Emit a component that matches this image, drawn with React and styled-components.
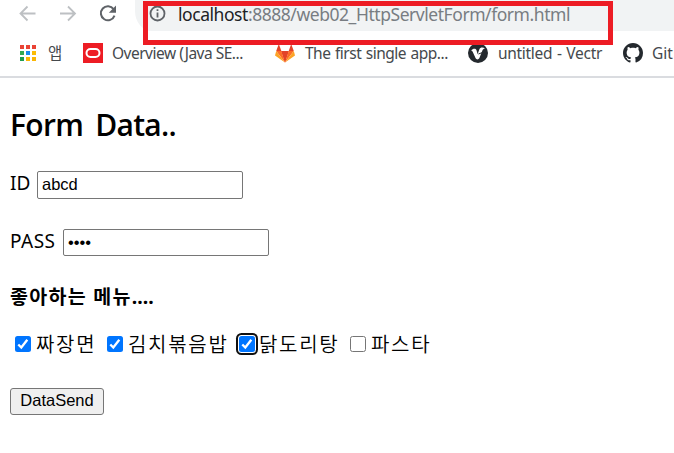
import React from "react";
import styled, { createGlobalStyle } from "styled-components";

const Global = createGlobalStyle`
  * { box-sizing: border-box; }
  html, body { margin: 0; background: #fff; overflow: hidden; }
  body { font-family: "Noto Sans", "Noto Sans CJK KR", sans-serif; color: #000; }
`;

const Window = styled.div`
  position: relative;
  width: 674px;
  height: 453px;
  overflow: hidden;
  background: #fff;
`;

const Toolbar = styled.header`
  display: flex;
  height: 31px;
  svg { display: block; flex: none; }
`;

const NavIcons = styled.nav`
  width: 135px;
  flex: none;
`;

const AddressBar = styled.div`
  flex: 1;
  display: flex;
  background: #f1f3f4;
  border-bottom-left-radius: 17px 20px;
  padding-left: 14px;
`;

const Url = styled.div`
  margin-left: 12px;
  height: 28px;
  line-height: 28px;
  font-size: 17.5px;
  letter-spacing: ${(p) => p.$spacing}px;
  color: #787d82;
  white-space: nowrap;
  b { font-weight: inherit; color: #202124; }
`;

const Bookmarks = styled.div`
  display: flex;
  height: 47px;
  border-bottom: 2px solid #dadce0;
  padding-left: 18px;
`;

const Bookmark = styled.div`
  display: flex;
  flex: none;
  width: ${(p) => p.$width}px;
  svg { display: block; flex: none; margin-top: 12px; }
`;

const BookmarkName = styled.span`
  margin-left: ${(p) => p.$gap ?? 9}px;
  height: 44px;
  line-height: 45px;
  font-size: 15.5px;
  letter-spacing: ${(p) => p.$spacing ?? 0}px;
  word-spacing: ${(p) => p.$words ?? 0}px;
  color: #45494d;
  white-space: nowrap;
`;

const Marker = styled.div`
  position: absolute;
  left: 143px;
  top: 1px;
  width: 470px;
  height: 44px;
  border: 5px solid #ed1c24;
`;

const Page = styled.form`
  padding: 27px 0 0 10px;
`;

const Title = styled.h1`
  margin: 0;
  height: 40px;
  line-height: 40px;
  font-family: "Open Sans", sans-serif;
  font-size: 30px;
  font-weight: 650;
  letter-spacing: -0.7px;
  word-spacing: 5px;
  white-space: nowrap;
`;

const Field = styled.label`
  display: flex;
  margin-top: ${(p) => p.$top}px;
  height: 28px;
`;

const FieldName = styled.span`
  width: ${(p) => p.$width}px;
  line-height: 25px;
  font-size: 19px;
  letter-spacing: ${(p) => p.$spacing}px;
  white-space: nowrap;
`;

const Input = styled.input`
  width: 206px;
  height: ${(p) => p.$height}px;
  margin: 0;
  padding: 0 4px 1px;
  border: 1px solid #767676;
  border-radius: 2px;
  font: 16.5px "Liberation Sans", Arial, sans-serif;
  outline: none;
`;

const Subtitle = styled.h2`
  margin: 26px 0 0;
  height: 28px;
  line-height: 28px;
  font-size: 19.5px;
  font-weight: 700;
  letter-spacing: 1.3px;
  white-space: nowrap;
  span { letter-spacing: 0; }
`;

const Menu = styled.div`
  display: flex;
  align-items: center;
  margin-top: 19px;
  height: 28px;
`;

const Option = styled.label`
  display: flex;
  align-items: center;
  flex: none;
  width: ${(p) => p.$width}px;
  padding-left: 5px;
  height: 28px;
  font-size: 20px;
  letter-spacing: 1.7px;
  line-height: 28px;
  font-weight: 350;
  font-family: "Noto Sans CJK KR", sans-serif;
  white-space: nowrap;
`;

const Check = styled.span`
  flex: none;
  width: 16px;
  height: 16px;
  margin-right: ${(p) => (p.$focus ? 4 : 5)}px;
  border-radius: 2.5px;
  border: ${(p) => (p.$on ? "0" : "1px solid #767676")};
  background: ${(p) => (p.$on ? "#0075ff" : "#fff")};
  box-shadow: ${(p) => (p.$focus ? "0 0 0 1px #fff, 0 0 0 3px #101010" : "none")};
  svg { display: block; }
`;

const Send = styled.button`
  display: block;
  margin: 30px 0 0;
  width: 94px;
  height: 27px;
  padding: 0 0 2px;
  border: 1px solid #767676;
  border-radius: 3px;
  background: #efefef;
  color: #000;
  font: 16.5px "Liberation Sans", Arial, sans-serif;
`;

const options = [
  { name: "짜장면", width: 92, on: true },
  { name: "김치볶음밥", width: 132, on: true },
  { name: "닭도리탕", width: 111, on: true, focus: true },
  { name: "파스타", width: 90 },
];

function NavDrawing() {
  return (
    <svg width="135" height="31" fill="none" strokeWidth="1.8">
      <g stroke="#bdc0c3">
        <path d="M35.5 13.5H21M27.5 6.5l-7 7 7 7" />
        <path d="M60 13.5h14.5M68 6.5l7 7-7 7" />
      </g>
      <path d="M113.6 9.2A7 7 0 1 0 114.5 15.6" stroke="#5f6368" strokeWidth="2" />
      <path d="M116 5.5v7.2h-7.2z" fill="#5f6368" />
    </svg>
  );
}

function InfoIcon() {
  return (
    <svg width="17" height="28" fill="none">
      <circle cx="8.5" cy="13.5" r="7" stroke="#5f6368" strokeWidth="1.8" />
      <path d="M8.5 12.5v5M8.5 9.2v1.8" stroke="#5f6368" strokeWidth="1.8" />
    </svg>
  );
}

function AppsIcon() {
  const colors = ["#ea4335", "#ea4335", "#ea4335", "#34a853", "#1a8cf0", "#fbbc05", "#1e9e53", "#fbb605", "#fbb605"];
  return (
    <svg width="20" height="20">
      {colors.map((c, i) => (
        <rect key={i} x={2 + (i % 3) * 6} y={2 + Math.floor(i / 3) * 6} width="4" height="4" fill={c} />
      ))}
    </svg>
  );
}

function OracleIcon() {
  return (
    <svg width="20" height="20">
      <path d="M0 0h20v20H0z" fill="#ed1c24" />
      <rect x="3.5" y="6" width="13" height="8" rx="4" fill="none" stroke="#fff" strokeWidth="2" />
    </svg>
  );
}

function GitlabIcon() {
  return (
    <svg width="20" height="20" viewBox="0 0 20 20">
      <path d="M3.8 1 6.3 8h7.4L10 19.5z" fill="#e24329" />
      <path d="M6.3 8h7.4L10 19.5z" fill="#e24329" />
      <path d="M1.2 8h5.1L10 19.5zM18.8 8h-5.1L10 19.5z" fill="#fc6d26" />
      <path d="M1.2 8 0 12.4l10 7.1zM18.8 8 20 12.4l-10 7.1z" fill="#fca326" />
      <path d="M3.8 1 1.2 8h5.1zM16.2 1 13.7 8h5.1z" fill="#e24329" />
    </svg>
  );
}

function VectrIcon() {
  return (
    <svg width="20" height="20">
      <circle cx="10" cy="10" r="10" fill="#24292e" />
      <path d="M3.2 7.4c1.5-1.8 4.4-2.5 5.3-.1l1.1 4 1.7-4.9c1-2.5 4.1-2.2 5.7-.9-1.5.2-2.1.8-2.7 2.2l-3 7.6c-.8 1.6-3.1 1.5-3.8-.2L4.8 8.9c-.4-.8-.8-1.2-1.6-1.5z" fill="#fff" />
      <path d="m10.4 11 3.6-1.3" stroke="#24292e" strokeWidth="1" />
    </svg>
  );
}

function GithubIcon() {
  return (
    <svg width="20" height="20" viewBox="0 0 16 16" fill="#24292e">
      <path d="M8 0C3.58 0 0 3.58 0 8c0 3.54 2.29 6.53 5.47 7.59.4.07.55-.17.55-.38 0-.19-.01-.82-.01-1.49-2.01.37-2.53-.49-2.69-.94-.09-.23-.48-.94-.82-1.13-.28-.15-.68-.52-.01-.53.63-.01 1.08.58 1.23.82.72 1.21 1.87.87 2.33.66.07-.52.28-.87.51-1.07-1.78-.2-3.64-.89-3.64-3.95 0-.87.31-1.59.82-2.15-.08-.2-.36-1.02.08-2.12 0 0 .67-.21 2.2.82.64-.18 1.32-.27 2-.27s1.36.09 2 .27c1.53-1.04 2.2-.82 2.2-.82.44 1.1.16 1.92.08 2.12.51.56.82 1.27.82 2.15 0 3.07-1.87 3.75-3.65 3.95.29.25.54.73.54 1.48 0 1.07-.01 1.93-.01 2.2 0 .21.15.46.55.38A8.01 8.01 0 0 0 16 8c0-4.42-3.58-8-8-8z" />
    </svg>
  );
}

export default function App() {
  return (
    <Window>
      <Global />
      <Toolbar>
        <NavIcons><NavDrawing /></NavIcons>
        <AddressBar>
          <InfoIcon />
          <Url $spacing={-0.45}><b>localhost</b>:8888/web02_HttpServletForm/form.html</Url>
        </AddressBar>
      </Toolbar>
      <Bookmarks>
        <Bookmark $width={65}><AppsIcon /><BookmarkName $gap={10}>앱</BookmarkName></Bookmark>
        <Bookmark $width={192}><OracleIcon /><BookmarkName $spacing={-0.5}>Overview (Java SE...</BookmarkName></Bookmark>
        <Bookmark $width={193}><GitlabIcon /><BookmarkName $gap={10} $spacing={-0.5} $words={1}>The first single app...</BookmarkName></Bookmark>
        <Bookmark $width={155}><VectrIcon /><BookmarkName $gap={10} $spacing={-0.3} $words={1}>untitled - Vectr</BookmarkName></Bookmark>
        <Bookmark $width={70}><GithubIcon /><BookmarkName>GitHub</BookmarkName></Bookmark>
      </Bookmarks>
      <Page onSubmit={(e) => e.preventDefault()}>
        <Title>Form Data..</Title>
        <Field $top={26}><FieldName $width={27} $spacing={0}>ID</FieldName><Input $height={28} defaultValue="abcd" /></Field>
        <Field $top={30}><FieldName $width={53} $spacing={0.5}>PASS</FieldName><Input $height={27} type="password" defaultValue="abcd" /></Field>
        <Subtitle>좋아하는 메뉴<span>....</span></Subtitle>
        <Menu>
          {options.map((o) => (
            <Option key={o.name} $width={o.width}>
              <Check $on={o.on} $focus={o.focus}>
                {o.on && (
                  <svg width="16" height="16" fill="none" stroke="#fff" strokeWidth="2.3">
                    <path d="m3.3 8.5 3 3 6-7.7" />
                  </svg>
                )}
              </Check>
              {o.name}
            </Option>
          ))}
        </Menu>
        <Send>DataSend</Send>
      </Page>
      <Marker />
    </Window>
  );
}
